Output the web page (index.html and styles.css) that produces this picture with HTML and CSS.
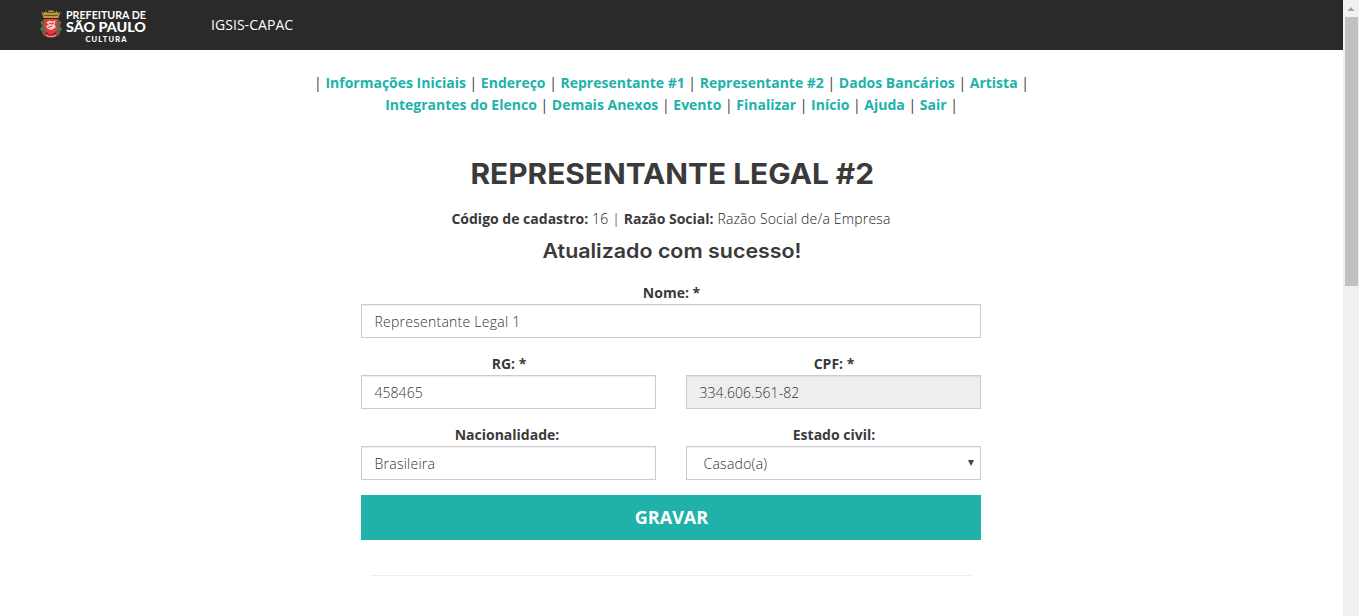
FILE: index.html
```html
<!DOCTYPE html>
<html lang="pt-BR">
<head>
<meta charset="utf-8">
<title>IGSIS-CAPAC</title>
<link rel="stylesheet" href="styles.css">
</head>
<body>
<div class="page">
  <header class="navbar">
    <svg class="logo" width="110" height="36" viewBox="0 0 110 36">
      <g class="crest">
        <path d="M4 11L1 14L2 18L0 21L3 26L6 26V12ZM18 11L21 14L20 18L22 21L19 26L16 26V12Z" fill="#2a7d52"/>
        <path d="M1 14L3 17M1 20L3 22M21 14L19 17M21 20L19 22" stroke="#d23a35" stroke-width="1.500"/>
        <path d="M1.500 3.500L4 5.500L5 3L7.500 5L8.500 2.500H13.500L14.500 5L17 3L18 5.500L20.500 3.500L18.500 10H3.500Z" fill="#b99a35"/>
        <path d="M4 7.500H18M8 4.500H14" stroke="#6a511f" stroke-width="1"/>
        <path d="M4.500 11H17.500V20Q17 25 11 27Q5 25 4.500 20Z" fill="#e8383b"/>
        <path d="M6.500 14.500L9.500 12.500L12 13.500L15.500 12.500L14.500 17L16 19L12 22L8 21L6 18L9 17Z" fill="#f2d5d2"/>
        <path d="M9 15L12 16L14 14.500M8 19.500L12 18" fill="none" stroke="#e8383b" stroke-width="1.200"/>
        <path d="M2 24L6 25.500L11 27.500L16 25.500L20 24L19 27L14 29.500H8L3 27Z" fill="#c7363a"/>
        <path d="M6 27.500L11 28.800L16 27.500" fill="none" stroke="#efc9c3" stroke-width=".8"/>
      </g>
      <g fill="#fff" font-family="Lato, sans-serif">
        <text x="26" y="11" font-size="10.500" font-weight="700" textLength="80" lengthAdjust="spacingAndGlyphs">PREFEITURA DE</text>
        <text x="26" y="24" font-size="13" font-weight="900" textLength="80" lengthAdjust="spacingAndGlyphs">SÃO PAULO</text>
        <text x="45.500" y="33.500" font-size="7.500" font-weight="900" textLength="41" lengthAdjust="spacing">CULTURA</text>
      </g>
    </svg>
    <a class="brand">IGSIS-CAPAC</a>
  </header>
  <main class="content">
    <nav class="menu">
      <div class="first">| <a>Informações Iniciais</a> | <a>Endereço</a> | <a>Representante #1</a> | <a>Representante #2</a> | <a>Dados Bancários</a> | <a>Artista</a> |</div>
      <div class="second"><a>Integrantes do Elenco</a> | <a>Demais Anexos</a> | <a>Evento</a> | <a>Finalizar</a> | <a>Início</a> | <a>Ajuda</a> | <a>Sair</a> |</div>
    </nav>
    <h1 class="title">REPRESENTANTE LEGAL #2</h1>
    <p class="summary"><b>Código de cadastro:</b> 16 | <b>Razão Social:</b> Razão Social de/a Empresa</p>
    <h2 class="message">Atualizado com sucesso!</h2>
    <form class="form">
      <div class="field wide"><label>Nome: *</label><div class="control">Representante Legal 1</div></div>
      <div class="field"><label>RG: *</label><div class="control digits">458465</div></div>
      <div class="field"><label>CPF: *</label><div class="control digits readonly">334.606.561-82</div></div>
      <div class="field"><label class="nationality">Nacionalidade:</label><div class="control">Brasileira</div></div>
      <div class="field"><label>Estado civil:</label><div class="control select"><span>Casado(a)</span><svg width="6" height="6" viewBox="0 0 6 6"><path d="M0 0H6L3 6Z" fill="#444"/></svg></div></div>
      <button type="button" class="save wide">GRAVAR</button>
    </form>
    <hr class="rule">
  </main>
</div>
<aside class="scrollbar">
  <svg width="16" height="17" viewBox="0 0 16 17"><path d="M4.500 11L8 7L11.500 11Z" fill="#a3a3a3"/></svg>
  <div class="thumb"></div>
</aside>
</body>
</html>
```
FILE: styles.css
```css
* { box-sizing: border-box; }
body {
  margin: 0;
  display: flex;
  height: 616px;
  overflow: hidden;
  background: #fff;
  color: #3a3a3a;
  font: 300 14px/22px "Open Sans", sans-serif;
}
.page { width: 1343px; }
.navbar {
  display: flex;
  align-items: center;
  height: 50px;
  padding-left: 40px;
  background: #2a2a2a;
}
.logo { display: block; margin-bottom: -1px; }
.brand {
  margin-left: 61px;
  color: #fff;
  font-weight: 400;
  letter-spacing: 0.05px;
}
.content {
  display: flex;
  flex-direction: column;
  align-items: center;
  padding: 22px 1px 0 0;
  text-align: center;
}
.menu { font-weight: 400; white-space: nowrap; }
.menu a { color: #20b2aa; font-weight: 700; }
.first { padding-left: 1px; }
.second { padding-left: 1px; }
.title {
  margin: 42px 0 0 2px;
  font: 700 28px/32px Inter, sans-serif;
  white-space: nowrap;
  transform: scaleX(1.066);
}
.summary { margin: 18px 0 0; color: #222; letter-spacing: 0.18px; }
.summary b, label { color: #3a3a3a; font-weight: 700; letter-spacing: 0; }
label { padding-left: 1px; }
.nationality { padding: 0 3px 0 0; }
.message {
  margin: 7px 0 0 1px;
  font: 600 20px/28px Inter, sans-serif;
  white-space: nowrap;
  transform: scaleX(1.07);
}
.form {
  display: grid;
  grid-template-columns: 1fr 1fr;
  gap: 15px 30px;
  width: 620px;
  margin-top: 17px;
}
.wide { grid-column: 1 / -1; }
.field { height: 56px; }
label { display: block; }
.control {
  height: 34px;
  padding: 6px 12.500px;
  border: 1px solid #ccc;
  background: #fff;
  color: #333;
  text-align: left;
  letter-spacing: 0.25px;
  box-shadow: inset 0 1px 1px rgba(0, 0, 0, .075);
}
.digits { letter-spacing: 0.05px; }
.readonly { background: #eee; }
.select {
  display: flex;
  align-items: center;
  justify-content: space-between;
  padding: 1px 6px 0 16.500px;
}
.select svg { margin-bottom: 2px; }
.save {
  height: 45px;
  padding: 0 0 2px 1px;
  border: 0;
  background: #20b2aa;
  color: #fff;
  font: 700 18px/24px "Open Sans", sans-serif;
}
.rule {
  width: 600px;
  margin: 35px 0 0;
  border: 0;
  border-top: 1px solid #eee;
}
.scrollbar { width: 16px; background: #f1f1f1; }
.scrollbar svg { display: block; }
.thumb { width: 13px; height: 269px; margin-left: 2px; background: #c1c1c1; }
```
